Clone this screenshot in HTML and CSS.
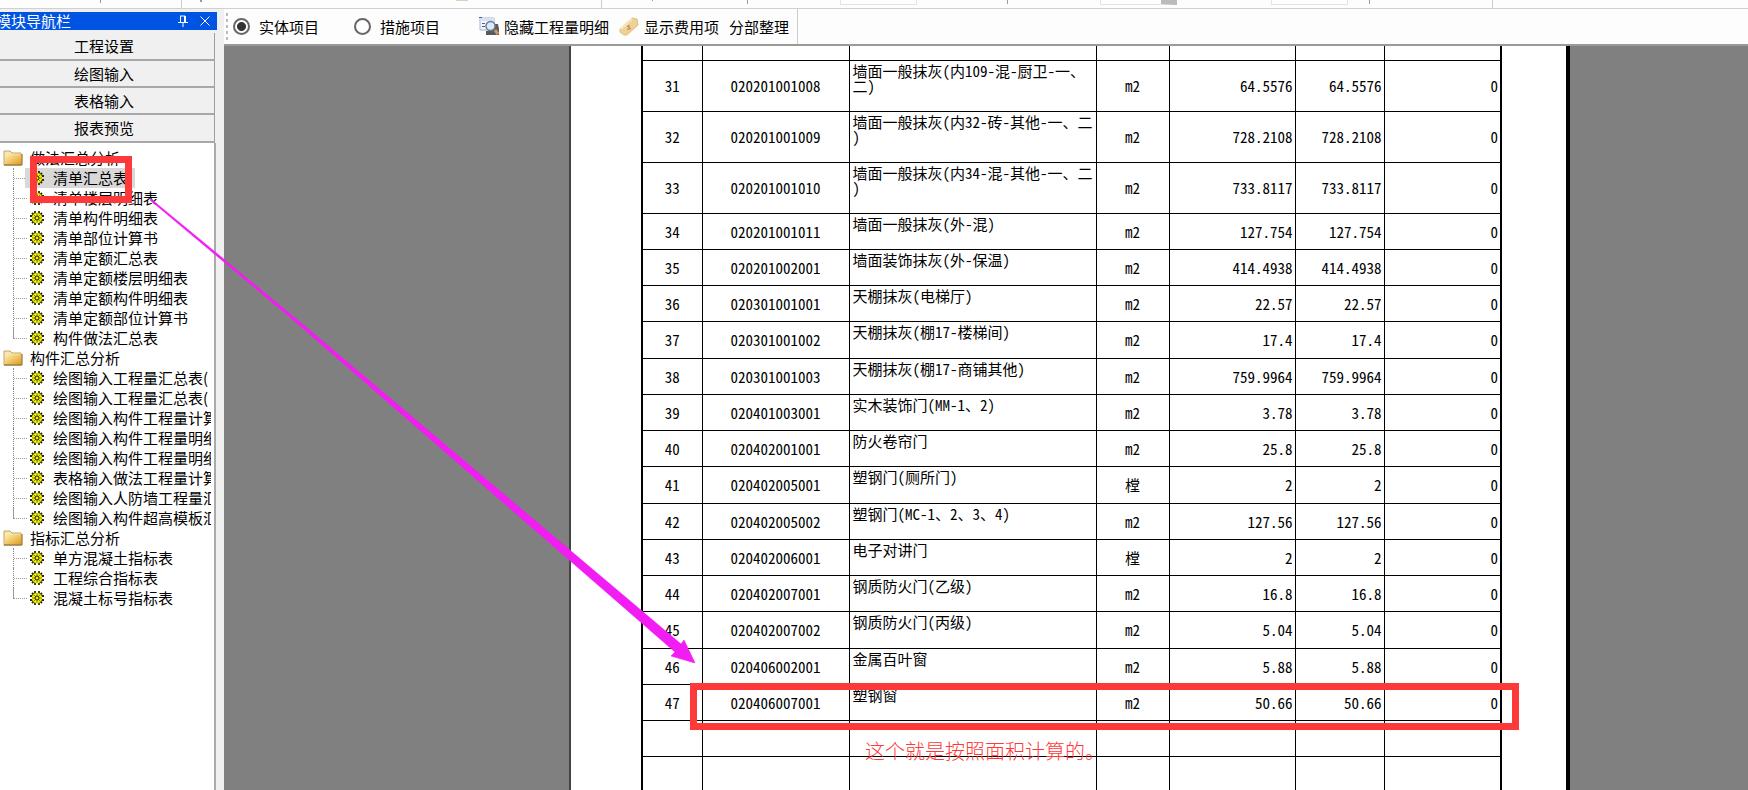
FILE: index.html
```
<!DOCTYPE html>
<html lang="zh-CN">
<head>
<meta charset="utf-8">
<title>报表预览</title>
<link rel="stylesheet" href="styles.css">
</head>
<body>
<svg class="defs" aria-hidden="true">
  <symbol id="folder" viewBox="0 0 20 16">
    <path d="M1 1h6l2 2h9v12H1z" fill="#f6e6b4" stroke="#c4a560"/>
    <path d="M2 4.500h16.500V14.500H2z" fill="url(#gold)"/>
    <path d="M1 15h18V4" fill="none" stroke="#80601c"/>
  </symbol>
  <symbol id="gear" viewBox="0 0 14 14">
    <path d="M5 0v14M9 0v14M0 5h14M0 9h14M2 2l10 10M12 2L2 12" stroke="#2c2c00" stroke-width="1.800"/>
    <circle cx="7" cy="7" r="5.200" fill="#f4f000"/>
    <path d="M7 2v10M2 7h10M3.500 3.500l7 7M10.500 3.500l-7 7" stroke="#6a6a08" stroke-width=".8"/>
    <circle cx="7" cy="7" r="2" fill="#f4f000" stroke="#222200"/>
  </symbol>
  <linearGradient id="gold" x2="1" y2="1"><stop offset="0" stop-color="#fff0b4"/><stop offset="1" stop-color="#e09a18"/></linearGradient>
</svg>
<div class="app">
  <div class="strip"><i class="s1"></i><i class="s2"></i><i class="s3"></i><i class="s4"></i><i class="s5"></i><i class="s6"></i><i class="s7"></i><i class="box b1"></i><i class="s8"></i><i class="box b2"></i><i class="box b3"></i><i class="s9"></i><i class="s10"></i></div>
  <div class="body">
    <aside class="nav">
      <header class="nav-title"><span class="nav-name">模块导航栏</span>
        <button class="tool" aria-label="固定"><svg width="10" height="12" viewBox="0 0 10 12"><path d="M2.500 1v6M2 1h5M6.500 1v6M7.500 1v6M0 7.500h10M5 8v4" stroke="#fff" fill="none"/></svg></button>
        <button class="tool" aria-label="关闭"><svg width="10" height="10" viewBox="0 0 10 10"><path d="M.5.5l9 9M9.500.5l-9 9" stroke="#fff"/></svg></button>
      </header>
      <div class="tabs"><button>工程设置</button><button>绘图输入</button><button>表格输入</button><button>报表预览</button></div>
      <div class="tree" id="tree"></div>
    </aside>
    <main class="main">
      <div class="bar">
        <i class="grip"></i>
        <label class="opt"><input type="radio" name="kind" checked>实体项目</label>
        <label class="opt"><input type="radio" name="kind">措施项目</label>
        <button class="act detail"><svg width="21" height="19" viewBox="0 0 21 19"><path d="M1 1h14v12H1z" fill="#f1f6fc" stroke="#a3b5cc"/><path d="M1 1h14v3H1z" fill="#d6e2f1"/><path d="M0 .5h3M3 6.500h3M3 9.500h3" stroke="#4f6484"/><path d="M7 18v-4h5l4-7h3l1 5v6z" fill="#555a63"/><circle cx="11.500" cy="9" r="4.500" fill="#d9eafa" stroke="#6d7c8f" stroke-width="1.500"/><path d="M16 13l3 4" stroke="#d8964a" stroke-width="3"/></svg>隐藏工程量明细</button>
        <button class="act fee"><svg width="20" height="20" viewBox="0 0 20 20"><path d="M1 12L13 1l5 1 1 6L8 18H5l-4-3z" fill="#efd096" stroke="#e3c07c"/><path d="M2 12L13 2" stroke="#f8e6c0" stroke-width="2"/><path d="M8 9l4 3M11 9c-2-1-3 0-1 1.500s0 2.500-2 1.500" fill="none" stroke="#a98a54"/></svg>显示费用项</button>
        <button class="act">分部整理</button>
      </div>
      <div class="work">
        <div class="sheet">
          <table class="report">
            <colgroup><col class="c1"><col class="c2"><col class="c3"><col class="c4"><col class="c5"><col class="c6"><col class="c7"></colgroup>
            <tbody id="rows"></tbody>
          </table>
        </div>
      </div>
    </main>
  </div>
  <div class="mark mark-tree"></div>
  <div class="mark mark-row"></div>
  <p class="note">这个就是按照面积计算的。</p>
  <svg class="arrow" width="700" height="670" viewBox="0 0 700 670"><path d="M150 200L151 199L300 322L681 644L684 640L695 663L671 656L675 652L298 324Z" fill="#f21df2" stroke="#f21df2" stroke-width=".6"/></svg>
</div>
<script src="app.js"></script>
</body>
</html>
```
FILE: app.js
```
const groups = [
  ["做法汇总分析", ["清单汇总表", "清单楼层明细表", "清单构件明细表", "清单部位计算书", "清单定额汇总表", "清单定额楼层明细表", "清单定额构件明细表", "清单定额部位计算书", "构件做法汇总表"]],
  ["构件汇总分析", ["绘图输入工程量汇总表(", "绘图输入工程量汇总表(", "绘图输入构件工程量计算", "绘图输入构件工程量明细", "绘图输入构件工程量明细", "表格输入做法工程量计算", "绘图输入人防墙工程量汇", "绘图输入构件超高模板汇"]],
  ["指标汇总分析", ["单方混凝土指标表", "工程综合指标表", "混凝土标号指标表"]]
];
const icon = (name, w, h) => `<svg class="${name}" width="${w}" height="${h}"><use href="#${name}"/></svg>`;
document.getElementById("tree").innerHTML = groups.map(([title, items], g) =>
  `<div class="group">${icon("folder", 20, 16)}${title}</div><ul>` +
  items.map((t, i) => `<li><span class="${g === 0 && i === 0 ? "leaf selected" : "leaf"}">${icon("gear", 14, 14)}<span>${t}</span></span></li>`).join("") +
  "</ul>").join("");

const rows = [
  ["", "", "", "", ""],
  ["31", "020201001008", "墙面一般抹灰(内109-混-厨卫-一、<br>二)", "m2", "64.5576"],
  ["32", "020201001009", "墙面一般抹灰(内32-砖-其他-一、二<br>)", "m2", "728.2108"],
  ["33", "020201001010", "墙面一般抹灰(内34-混-其他-一、二<br>)", "m2", "733.8117"],
  ["34", "020201001011", "墙面一般抹灰(外-混)", "m2", "127.754"],
  ["35", "020201002001", "墙面装饰抹灰(外-保温)", "m2", "414.4938"],
  ["36", "020301001001", "天棚抹灰(电梯厅)", "m2", "22.57"],
  ["37", "020301001002", "天棚抹灰(棚17-楼梯间)", "m2", "17.4"],
  ["38", "020301001003", "天棚抹灰(棚17-商铺其他)", "m2", "759.9964"],
  ["39", "020401003001", "实木装饰门(MM-1、2)", "m2", "3.78"],
  ["40", "020402001001", "防火卷帘门", "m2", "25.8"],
  ["41", "020402005001", "塑钢门(厕所门)", "樘", "2"],
  ["42", "020402005002", "塑钢门(MC-1、2、3、4)", "m2", "127.56"],
  ["43", "020402006001", "电子对讲门", "樘", "2"],
  ["44", "020402007001", "钢质防火门(乙级)", "m2", "16.8"],
  ["45", "020402007002", "钢质防火门(丙级)", "m2", "5.04"],
  ["46", "020406002001", "金属百叶窗", "m2", "5.88"],
  ["47", "020406007001", "塑钢窗", "m2", "50.66"],
  ["", "", "", "", ""],
  ["", "", "", "", ""]
];
document.getElementById("rows").innerHTML = rows.map((r, i) => {
  const kind = i === 0 ? "first" : r[2].includes("<br>") ? "tall" : "line";
  return `<tr class="${kind}"><td>${r[0]}</td><td>${r[1]}</td><td class="name">${r[2]}</td><td>${r[3]}</td><td class="num">${r[4]}</td><td class="num">${r[4]}</td><td class="num">${r[0] ? "0" : ""}</td></tr>`;
}).join("");
```
FILE: styles.css
```
* { box-sizing: border-box; }
body { margin: 0; overflow: hidden; background: #fdfdfd; color: #000; font: 15px/20px "Noto Sans CJK SC", sans-serif; }
button { font: inherit; color: inherit; margin: 0; }
.defs { position: absolute; width: 0; height: 0; }
.app { position: relative; display: flex; flex-direction: column; height: 100vh; overflow: hidden; }
.strip { flex: none; display: flex; align-items: flex-start; height: 9px; border-bottom: 1px solid #d0d0d0; }
.strip i { flex: none; width: 1px; height: 3px; background: #999; }
.strip .s1 { margin-left: 100px; }
.strip .s2 { height: 8px; margin-left: 80px; background: #ccc; }
.strip .s3 { width: 2px; height: 2px; margin-left: 18px; }
.strip .s4 { width: 12px; height: 1px; margin-left: 254px; background: #c8dcb8; }
.strip .s5 { height: 8px; margin-left: 133px; background: #ccc; }
.strip .s6 { height: 1px; margin-left: 50px; }
.strip .s7 { height: 4px; margin-left: 94px; }
.strip .s8 { height: 4px; margin-left: 90px; }
.strip .s9 { height: 4px; margin-left: 21px; }
.strip .s10 { height: 8px; margin-left: 122px; background: #ccc; }
.strip .box { width: 77px; height: 5px; border: 1px solid #e4e4e4; border-top: 0; background: #fff; }
.strip .b1 { margin-left: 92px; }
.strip .b2 { margin-left: 92px; border-right: 16px solid #bbb; }
.strip .b3 { margin-left: 94px; }
.body { flex: 1; min-height: 0; display: flex; }

.nav { flex: none; width: 224px; padding: 3px 7px 0 0; display: flex; flex-direction: column; background: #f0f0f0; overflow: hidden; }
.nav-title { flex: none; display: flex; align-items: center; gap: 12px; height: 18px; padding-right: 7px; background: #0054e3; color: #fff; line-height: 18px; }
.nav-name { flex: 1; margin-left: -4px; }
.tool { display: flex; padding: 0; border: 0; background: none; }
.tabs { flex: none; display: flex; flex-direction: column; padding: 3px 2px 0 0; }
.tabs button { height: 28px; padding: 0 6px 0 0; border: 0; border-right: 1px solid #a0a0a0; border-bottom: 2px solid #a8a8a8; background: #f0f0f0; text-align: center; }
.tabs button + button { height: 27px; }
.tabs button:last-child { height: 28px; }
.tree { flex: 1; min-height: 0; margin-right: 1px; padding: 5px 3px 0 3px; border-right: 2px solid #aaa; background: #fff; overflow: hidden; white-space: nowrap; }
.group { display: flex; align-items: center; gap: 7px; height: 20px; }
.tree svg { flex: none; }
.tree ul { margin: 0 0 0 10px; padding: 0; list-style: none; overflow: hidden; }
.tree li { display: flex; height: 20px; background: repeating-linear-gradient(90deg, #999 0 1px, transparent 1px 2px) 0 10px / 14px 1px no-repeat; border-left: 1px dotted #888; }
.tree li:last-child { border-image: linear-gradient(#999 55%, transparent 55%) 1; }
.leaf { flex: 1; margin-left: 13px; padding-left: 3px; display: flex; align-items: center; gap: 9px; overflow: hidden; }
.leaf.selected { flex: none; margin-left: 11px; padding: 0 7px 0 5px; background: #d8d8d8; }

.main { flex: 1; min-width: 0; display: flex; flex-direction: column; }
.bar { flex: none; display: flex; align-items: center; align-self: flex-start; height: 35px; border-right: 1px solid #ccc; padding: 0 8px 0 2px; white-space: nowrap; }
.grip { width: 2px; height: 28px; background: repeating-linear-gradient(#bbb 0 3px, transparent 3px 6px); }
.opt { display: flex; align-items: center; gap: 9px; margin-right: 35px; }
.opt input { appearance: none; width: 17px; height: 17px; margin: 0 0 0 5px; border: 2px solid #666; border-radius: 50%; background: #fff; }
.opt input:checked { background: radial-gradient(#333 0 4px, #fff 5px); }
.opt + .opt { margin-right: 39px; margin-left: -5px; }
.act { display: flex; align-items: center; gap: 4px; padding: 0; border: 0; background: none; margin-right: 10px; }
.fee { gap: 5px; }
.act:last-child { margin-right: 0; }
.work { flex: 1; min-height: 0; display: flex; align-items: stretch; border-top: 2px solid #9a9a9a; background: #808080; overflow: hidden; }
.sheet { flex: none; margin-left: 345px; padding: 0 64px 0 70px; border-left: 2px solid #444; border-right: 4px solid #000; background: #fff; }

.report { width: 860px; table-layout: fixed; border-collapse: collapse; border: 2px solid #000; border-top: 0; line-height: 15px; font-feature-settings: "hwid"; }
.report td { padding: 0; border: 1px solid #000; text-align: center; }
.report .name { padding: 2px 0 0 3px; text-align: left; vertical-align: top; white-space: nowrap; }
.report .num { padding-right: 2px; text-align: right; }
.c1 { width: 60px; } .c2 { width: 147px; } .c3 { width: 247px; } .c4 { width: 73px; } .c5 { width: 126px; } .c6 { width: 89px; } .c7 { width: 117px; }
.report .first td { border-top: 0; }
.first { height: 14px; }
.tall { height: 51px; }
.line { height: 36px; }
.line:nth-child(4n) { height: 37px; }

.mark { position: absolute; border: 7px solid #fd3939; }
.mark-tree { left: 30px; top: 156px; width: 102px; height: 47px; }
.mark-row { left: 690px; top: 683px; width: 829px; height: 47px; }
.note { position: absolute; left: 865px; top: 738px; margin: 0; color: #fd3939; font-size: 20px; line-height: 26px; font-weight: 300; white-space: nowrap; }
.arrow { position: absolute; left: 0; top: 0; pointer-events: none; }
```
